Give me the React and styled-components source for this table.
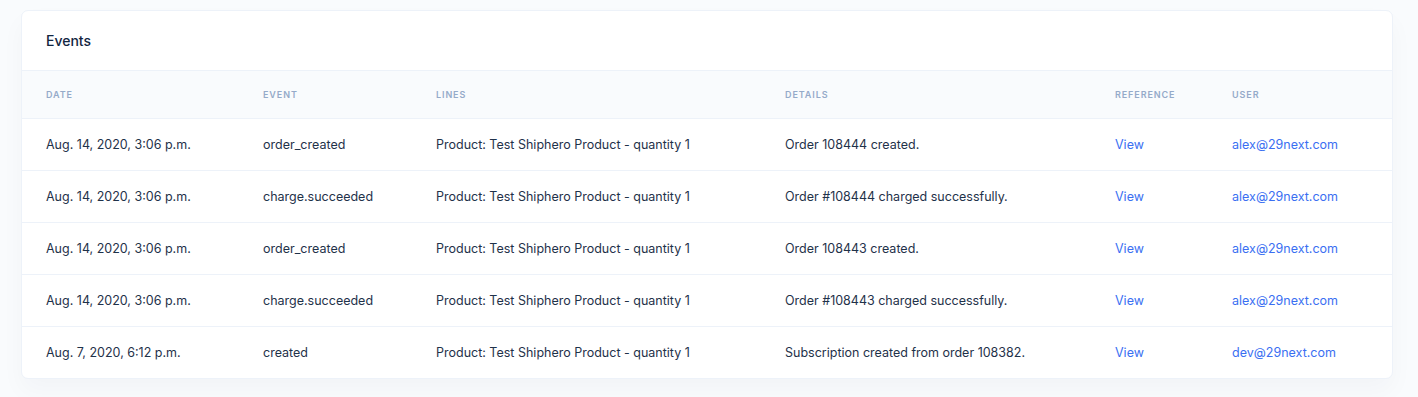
import React from "react";
import styled, { createGlobalStyle } from "styled-components";

const GlobalStyle = createGlobalStyle`
  body {
    margin: 0;
    background: #f9fbfd;
    font-family: "Inter", "Liberation Sans", sans-serif;
    color: #12263f;
  }
`;

const Page = styled.div`
  padding: 10px 25px 19px 21px;
`;

const Card = styled.div`
  background: #fff;
  border: 1px solid #edf2f9;
  border-radius: 7px;
  box-shadow: 0 12px 24px rgba(18, 38, 63, 0.03);
  overflow: hidden;
`;

const CardHeader = styled.div`
  height: 59px;
  display: flex;
  align-items: center;
  padding: 0 24px;
  border-bottom: 1px solid #edf2f9;
`;

const Title = styled.h4`
  margin: 0;
  font-size: 14px;
  font-weight: 500;
  color: #12263f;
`;

const Table = styled.table`
  width: 100%;
  border-collapse: collapse;
  table-layout: fixed;
`;

const Th = styled.th`
  text-align: left;
  background: #f9fbfd;
  color: #95aac9;
  font-size: 9px;
  font-weight: 600;
  text-transform: uppercase;
  letter-spacing: 0.1em;
  height: 47px;
  padding: 0 0 0 ${(p) => p.$pl || 0}px;
  border-bottom: 1px solid #edf2f9;
  width: ${(p) => (p.$w ? `${p.$w}px` : "auto")};
`;

const Td = styled.td`
  height: 51px;
  padding: 0 0 0 ${(p) => p.$pl || 0}px;
  font-size: 12.5px;
  color: #1f324a;
  border-top: 1px solid #edf2f9;
  white-space: nowrap;
`;

const Row = styled.tr`
  &:first-child td {
    border-top: none;
  }
`;

const Link = styled.a`
  color: #3a6ff2;
  text-decoration: none;
`;

const columns = [
  { key: "date", label: "Date", w: 217, pl: 24 },
  { key: "event", label: "Event", w: 173 },
  { key: "lines", label: "Lines", w: 349 },
  { key: "details", label: "Details", w: 330 },
  { key: "ref", label: "Reference", w: 117 },
  { key: "user", label: "User" },
];

const line = "Product: Test Shiphero Product - quantity 1";

const events = [
  {
    date: "Aug. 14, 2020, 3:06 p.m.",
    event: "order_created",
    details: "Order 108444 created.",
    user: "alex@29next.com",
  },
  {
    date: "Aug. 14, 2020, 3:06 p.m.",
    event: "charge.succeeded",
    details: "Order #108444 charged successfully.",
    user: "alex@29next.com",
  },
  {
    date: "Aug. 14, 2020, 3:06 p.m.",
    event: "order_created",
    details: "Order 108443 created.",
    user: "alex@29next.com",
  },
  {
    date: "Aug. 14, 2020, 3:06 p.m.",
    event: "charge.succeeded",
    details: "Order #108443 charged successfully.",
    user: "alex@29next.com",
  },
  {
    date: "Aug. 7, 2020, 6:12 p.m.",
    event: "created",
    details: "Subscription created from order 108382.",
    user: "dev@29next.com",
  },
];

export default function App() {
  return (
    <>
      <GlobalStyle />
      <Page>
        <Card>
          <CardHeader>
            <Title>Events</Title>
          </CardHeader>
          <Table>
            <thead>
              <tr>
                {columns.map((c) => (
                  <Th key={c.key} $w={c.w} $pl={c.pl}>
                    {c.label}
                  </Th>
                ))}
              </tr>
            </thead>
            <tbody>
              {events.map((e, i) => (
                <Row key={i}>
                  <Td $pl={24}>{e.date}</Td>
                  <Td>{e.event}</Td>
                  <Td>{line}</Td>
                  <Td>{e.details}</Td>
                  <Td>
                    <Link href="#">View</Link>
                  </Td>
                  <Td>
                    <Link href="#">{e.user}</Link>
                  </Td>
                </Row>
              ))}
            </tbody>
          </Table>
        </Card>
      </Page>
    </>
  );
}
